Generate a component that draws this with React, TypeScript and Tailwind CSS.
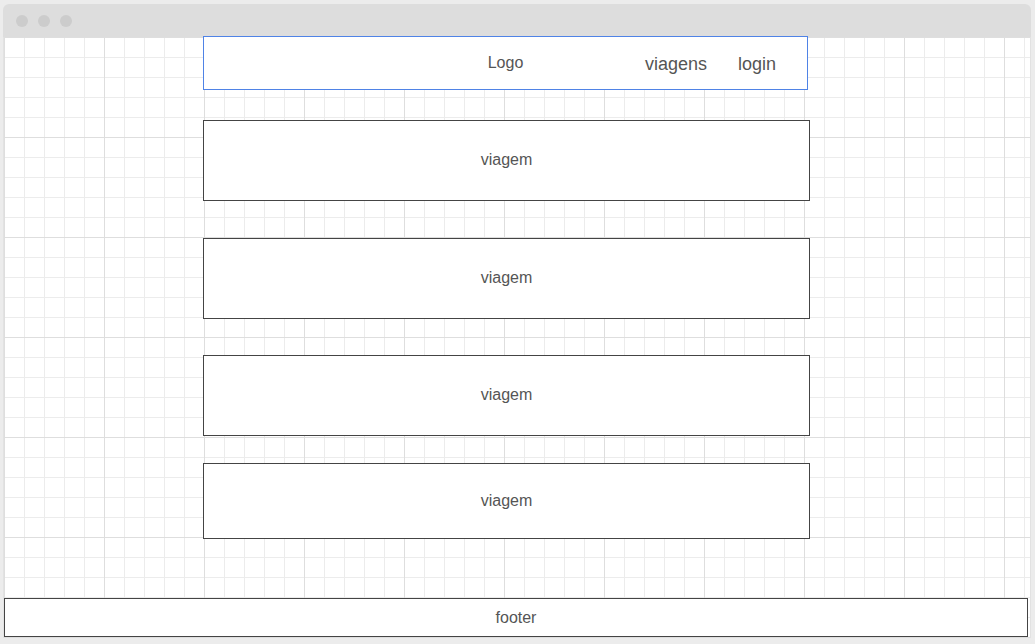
export default function App() {
  const box =
    "ml-[199px] w-[607px] border border-[#444444] bg-white flex items-center justify-center text-[16px] text-[#555555]";
  return (
    <div className="w-[1035px] h-[644px] bg-[#ececec] pt-[4px] pl-[3px] font-['Liberation_Sans',Arial,sans-serif]">
      <div className="w-[1028px] h-[634px] flex flex-col rounded-t-[6px] overflow-hidden">
        <div className="h-[33px] shrink-0 bg-[#dddddd] flex items-center gap-[10px] pl-[13px]">
          <span className="w-[12px] h-[12px] rounded-full bg-[#cccccc]" />
          <span className="w-[12px] h-[12px] rounded-full bg-[#cccccc]" />
          <span className="w-[12px] h-[12px] rounded-full bg-[#cccccc]" />
        </div>
        <div className="h-[601px] shrink-0 flex flex-col border-x border-[#e2e2e2] bg-white bg-[linear-gradient(to_right,#dedede_1px,transparent_1px),linear-gradient(to_bottom,#dedede_1px,transparent_1px),linear-gradient(to_right,#ececec_1px,transparent_1px),linear-gradient(to_bottom,#ececec_1px,transparent_1px)] bg-[size:100px_100px,100px_100px,20px_20px,20px_20px]">
          <div className="ml-[199px] mt-[-1px] w-[605px] h-[54px] border border-[#4f83e6] bg-white grid grid-cols-[1fr_auto_1fr] items-center text-[#555555]">
            <div />
            <div className="text-[16px] pb-[1px]">Logo</div>
            <div className="flex justify-end gap-[31px] pr-[31px] text-[18px] pt-[2px]">
              <span>viagens</span>
              <span>login</span>
            </div>
          </div>
          <div className={`${box} mt-[30px] h-[81px] pb-[2px]`}>viagem</div>
          <div className={`${box} mt-[37px] h-[81px] pb-[2px]`}>viagem</div>
          <div className={`${box} mt-[36px] h-[81px] pb-[1px]`}>viagem</div>
          <div className={`${box} mt-[27px] h-[76px]`}>viagem</div>
          <div className="mt-[59px] w-[1024px] h-[39px] border border-[#444444] bg-white flex items-center justify-center text-[16px] text-[#555555]">
            footer
          </div>
        </div>
      </div>
    </div>
  );
}
